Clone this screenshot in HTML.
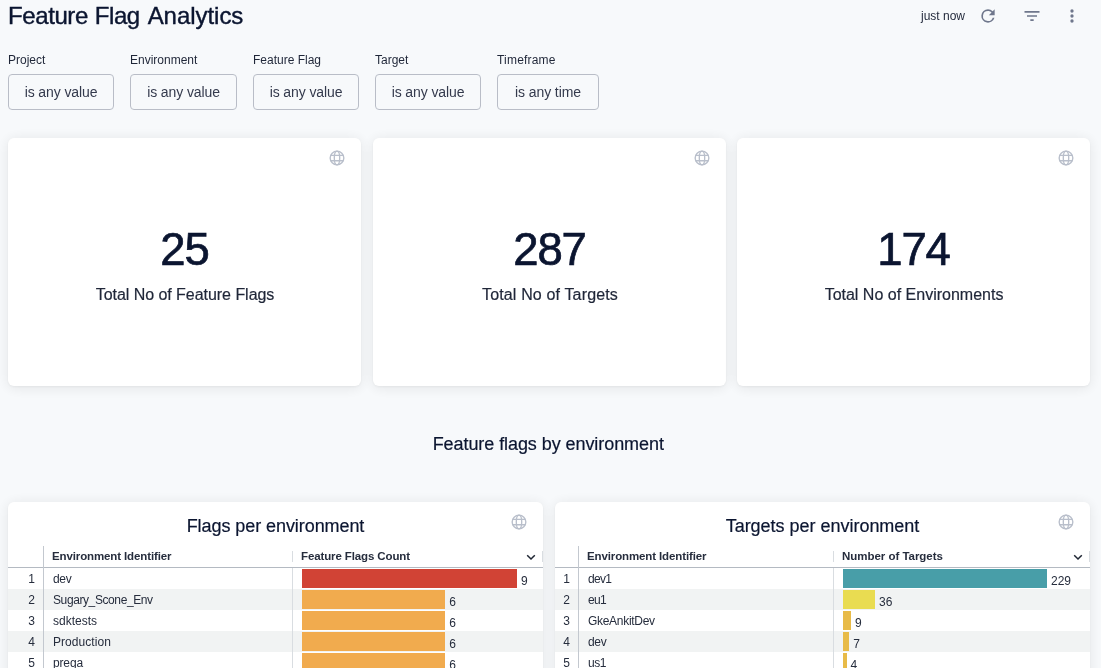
<!DOCTYPE html>
<html><head><meta charset="utf-8"><title>Feature Flag Analytics</title>
<style>
*{box-sizing:border-box;margin:0;padding:0}
html,body{width:1101px;height:668px;overflow:hidden;background:#f7f9fb;font-family:"Liberation Sans",Arial,sans-serif;color:#0b1530}
.abs{position:absolute}
#title{left:8px;top:2px;font-size:24px;line-height:28px;color:#0b1530;white-space:nowrap;letter-spacing:-0.1px;-webkit-text-stroke:0.4px #0b1530}
#title span{display:inline-block}
#jn{left:921px;top:8px;font-size:12px;line-height:16px;color:#1f2638;white-space:nowrap}
.flab{top:52px;font-size:12px;line-height:16px;color:#1f2638;white-space:nowrap}
.fbtn{top:74px;height:36px;border:1px solid #b9bdc7;border-radius:4px;background:#f7f9fb;font-size:14px;line-height:35px;text-align:center;color:#343a4d;white-space:nowrap;letter-spacing:-0.1px}
.card{background:#fff;border-radius:6px;box-shadow:0 1.5px 14px 1px rgba(0,0,0,.08),0 1px 3px rgba(0,0,0,.05)}
.big{-webkit-text-stroke:0.7px #0b1530;font-size:45.5px;line-height:50px;text-align:center;color:#0b1530;top:225px;white-space:nowrap;letter-spacing:-1.1px}
.sub{-webkit-text-stroke:0.2px #1f2638;font-size:16px;line-height:20px;text-align:center;color:#1f2638;top:285px;white-space:nowrap}
.h18{-webkit-text-stroke:0.2px #0b1530;font-size:18px;line-height:22px;text-align:center;color:#0b1530;white-space:nowrap}
.th{font-size:11.5px;font-weight:bold;line-height:16px;color:#262d3d;top:548px;white-space:nowrap}
.td{font-size:12px;line-height:16px;color:#262d3d;white-space:nowrap}
.num{font-size:12px;line-height:16px;color:#262d3d;text-align:right;width:24px;white-space:nowrap}
.val{font-size:12px;line-height:14px;color:#262d3d;white-space:nowrap}
.row{height:21px}
.alt{background:#f1f3f3}
.vl{width:1px;background:#c3c8cf}
.vl2{width:1px;background:#d9dde1}
#wrap{position:absolute;left:0;top:0;width:1101px;height:668px;will-change:transform;opacity:.999}
</style></head><body><div id="wrap">
<div class="abs" id="title"><span style="letter-spacing:-0.4px">Feature</span> <span style="letter-spacing:-0.43px;margin-left:0.3px">Flag</span> <span style="letter-spacing:-0.04px;margin-left:1.3px">Analytics</span></div>
<div class="abs" id="jn">just now</div>
<svg class="abs" style="left:978px;top:6px" width="20" height="20" viewBox="0 0 24 24" fill="#6f778c"><path d="M17.65 6.35A7.96 7.96 0 0 0 12 4a8 8 0 1 0 7.73 10h-2.08A6 6 0 1 1 12 6c1.66 0 3.14.69 4.22 1.78L13 11h7V4l-2.35 2.35z"/></svg>
<svg class="abs" style="left:1022px;top:6px" width="20" height="20" viewBox="0 0 24 24" fill="#6f778c"><path d="M10 18h4v-2h-4v2zM3 6v2h18V6H3zm3 7h12v-2H6v2z"/></svg>
<svg class="abs" style="left:1062px;top:6px" width="20" height="20" viewBox="0 0 24 24" fill="#6f778c"><path d="M12 8a2 2 0 1 0 0-4 2 2 0 0 0 0 4zm0 2a2 2 0 1 0 0 4 2 2 0 0 0 0-4zm0 6a2 2 0 1 0 0 4 2 2 0 0 0 0-4z"/></svg>
<div class="abs flab" style="left:8px">Project</div>
<div class="abs flab" style="left:130px">Environment</div>
<div class="abs flab" style="left:253px">Feature Flag</div>
<div class="abs flab" style="left:375px">Target</div>
<div class="abs flab" style="left:497px ;letter-spacing:0.2px">Timeframe</div>
<div class="abs fbtn" style="left:8px;width:106px">is any value</div>
<div class="abs fbtn" style="left:130px;width:107px">is any value</div>
<div class="abs fbtn" style="left:253px;width:106px">is any value</div>
<div class="abs fbtn" style="left:375px;width:106px">is any value</div>
<div class="abs fbtn" style="left:497px;width:102px">is any time</div>
<div class="abs card" style="left:8px;top:138px;width:353px;height:248px"></div>
<div class="abs card" style="left:373px;top:138px;width:353px;height:248px"></div>
<div class="abs card" style="left:737px;top:138px;width:353px;height:248px"></div>
<div class="abs big" style="left:8px;width:353px">25</div>
<div class="abs sub" style="left:8px;width:354px;letter-spacing:-0.04px">Total No of Feature Flags</div>
<div class="abs big" style="left:373px;width:353px">287</div>
<div class="abs sub" style="left:373px;width:354px;letter-spacing:0.15px">Total No of Targets</div>
<div class="abs big" style="left:737px;width:353px">174</div>
<div class="abs sub" style="left:737px;width:354px;letter-spacing:0">Total No of Environments</div>
<svg class="abs" style="left:328px;top:149px" width="18" height="18" viewBox="0 0 18 18" fill="none" stroke="#b9bfcb" stroke-width="1.35"><circle cx="9" cy="9" r="6.85"/><ellipse cx="9" cy="9" rx="2.7" ry="6.85"/><path d="M2.7 6.3h12.6M2.7 11.7h12.6"/></svg><svg class="abs" style="left:693px;top:149px" width="18" height="18" viewBox="0 0 18 18" fill="none" stroke="#b9bfcb" stroke-width="1.35"><circle cx="9" cy="9" r="6.85"/><ellipse cx="9" cy="9" rx="2.7" ry="6.85"/><path d="M2.7 6.3h12.6M2.7 11.7h12.6"/></svg><svg class="abs" style="left:1057px;top:149px" width="18" height="18" viewBox="0 0 18 18" fill="none" stroke="#b9bfcb" stroke-width="1.35"><circle cx="9" cy="9" r="6.85"/><ellipse cx="9" cy="9" rx="2.7" ry="6.85"/><path d="M2.7 6.3h12.6M2.7 11.7h12.6"/></svg>
<div class="abs h18" style="left:0;width:1096.5px;top:433px;letter-spacing:-0.07px">Feature flags by environment</div>
<div class="abs card" style="left:8px;top:502px;width:535px;height:200px;overflow:hidden">
<div class="abs row" style="left:0;top:66px;width:535px"></div>
<div class="abs row alt" style="left:0;top:87px;width:535px"></div>
<div class="abs row" style="left:0;top:108px;width:535px"></div>
<div class="abs row alt" style="left:0;top:129px;width:535px"></div>
<div class="abs row" style="left:0;top:150px;width:535px"></div>
<div class="abs" style="left:0;top:65px;width:535px;height:1px;background:#b4bac2"></div>
<div class="abs vl" style="left:35px;top:44px;height:160px"></div>
<div class="abs vl2" style="left:284px;top:49px;height:11px"></div>
<div class="abs vl2" style="left:284px;top:66px;height:140px"></div>
<div class="abs vl2" style="left:534px;top:49px;height:11px"></div>
<div class="abs h18" style="left:0;width:535px;top:13px;letter-spacing:-0.07px">Flags per environment</div>
<div class="abs th" style="left:44px;top:46px;letter-spacing:-0.12px">Environment Identifier</div>
<div class="abs th" style="left:293px;top:46px;letter-spacing:-0.12px">Feature Flags Count</div>
<svg class="abs" style="left:517px;top:49px" width="12" height="12" viewBox="0 0 12 12" fill="none" stroke="#1f2633" stroke-width="1.5"><path d="M2.2 4.2L6 8l3.8-3.8"/></svg>
<div class="abs num" style="left:3px;top:69px">1</div>
<div class="abs td" style="left:45px;top:69px;letter-spacing:-0.3px">dev</div>
<div class="abs" style="left:294px;top:67px;width:215.0px;height:19px;background:#d14335"></div>
<div class="abs val" style="left:513.0px;top:72px">9</div>
<div class="abs num" style="left:3px;top:90px">2</div>
<div class="abs td" style="left:45px;top:90px;letter-spacing:-0.4px">Sugary_Scone_Env</div>
<div class="abs" style="left:294px;top:88px;width:143.3px;height:19px;background:#f1ab4e"></div>
<div class="abs val" style="left:441.3px;top:93px">6</div>
<div class="abs num" style="left:3px;top:111px">3</div>
<div class="abs td" style="left:45px;top:111px;letter-spacing:0px">sdktests</div>
<div class="abs" style="left:294px;top:109px;width:143.3px;height:19px;background:#f1ab4e"></div>
<div class="abs val" style="left:441.3px;top:114px">6</div>
<div class="abs num" style="left:3px;top:132px">4</div>
<div class="abs td" style="left:45px;top:132px;letter-spacing:0.05px">Production</div>
<div class="abs" style="left:294px;top:130px;width:143.3px;height:19px;background:#f1ab4e"></div>
<div class="abs val" style="left:441.3px;top:135px">6</div>
<div class="abs num" style="left:3px;top:153px">5</div>
<div class="abs td" style="left:45px;top:153px;letter-spacing:-0.15px">prega</div>
<div class="abs" style="left:294px;top:151px;width:143.3px;height:19px;background:#f1ab4e"></div>
<div class="abs val" style="left:441.3px;top:156px">6</div>
</div>
<div class="abs card" style="left:555px;top:502px;width:535px;height:200px;overflow:hidden">
<div class="abs row" style="left:0;top:66px;width:535px"></div>
<div class="abs row alt" style="left:0;top:87px;width:535px"></div>
<div class="abs row" style="left:0;top:108px;width:535px"></div>
<div class="abs row alt" style="left:0;top:129px;width:535px"></div>
<div class="abs row" style="left:0;top:150px;width:535px"></div>
<div class="abs" style="left:0;top:65px;width:535px;height:1px;background:#b4bac2"></div>
<div class="abs vl" style="left:23px;top:44px;height:160px"></div>
<div class="abs vl2" style="left:278px;top:49px;height:11px"></div>
<div class="abs vl2" style="left:278px;top:66px;height:140px"></div>
<div class="abs vl2" style="left:534px;top:49px;height:11px"></div>
<div class="abs h18" style="left:0;width:535px;top:13px;letter-spacing:-0.02px">Targets per environment</div>
<div class="abs th" style="left:32px;top:46px;letter-spacing:-0.12px">Environment Identifier</div>
<div class="abs th" style="left:287px;top:46px;letter-spacing:-0.03px">Number of Targets</div>
<svg class="abs" style="left:517px;top:49px" width="12" height="12" viewBox="0 0 12 12" fill="none" stroke="#1f2633" stroke-width="1.5"><path d="M2.2 4.2L6 8l3.8-3.8"/></svg>
<div class="abs num" style="left:-9px;top:69px">1</div>
<div class="abs td" style="left:33px;top:69px;letter-spacing:-0.7px">dev1</div>
<div class="abs" style="left:288px;top:67px;width:204.0px;height:19px;background:#489ea8"></div>
<div class="abs val" style="left:496.0px;top:72px">229</div>
<div class="abs num" style="left:-9px;top:90px">2</div>
<div class="abs td" style="left:33px;top:90px;letter-spacing:-0.7px">eu1</div>
<div class="abs" style="left:288px;top:88px;width:32.1px;height:19px;background:#e9dc51"></div>
<div class="abs val" style="left:324.1px;top:93px">36</div>
<div class="abs num" style="left:-9px;top:111px">3</div>
<div class="abs td" style="left:33px;top:111px;letter-spacing:-0.3px">GkeAnkitDev</div>
<div class="abs" style="left:288px;top:109px;width:8.0px;height:19px;background:#e8bb48"></div>
<div class="abs val" style="left:300.0px;top:114px">9</div>
<div class="abs num" style="left:-9px;top:132px">4</div>
<div class="abs td" style="left:33px;top:132px;letter-spacing:-0.3px">dev</div>
<div class="abs" style="left:288px;top:130px;width:6.2px;height:19px;background:#e8bb48"></div>
<div class="abs val" style="left:298.2px;top:135px">7</div>
<div class="abs num" style="left:-9px;top:153px">5</div>
<div class="abs td" style="left:33px;top:153px;letter-spacing:-0.4px">us1</div>
<div class="abs" style="left:288px;top:151px;width:3.6px;height:19px;background:#e8bb48"></div>
<div class="abs val" style="left:295.6px;top:156px">4</div>
</div>
<svg class="abs" style="left:510px;top:513px" width="18" height="18" viewBox="0 0 18 18" fill="none" stroke="#b9bfcb" stroke-width="1.35"><circle cx="9" cy="9" r="6.85"/><ellipse cx="9" cy="9" rx="2.7" ry="6.85"/><path d="M2.7 6.3h12.6M2.7 11.7h12.6"/></svg><svg class="abs" style="left:1057px;top:513px" width="18" height="18" viewBox="0 0 18 18" fill="none" stroke="#b9bfcb" stroke-width="1.35"><circle cx="9" cy="9" r="6.85"/><ellipse cx="9" cy="9" rx="2.7" ry="6.85"/><path d="M2.7 6.3h12.6M2.7 11.7h12.6"/></svg>
</div></body></html>
